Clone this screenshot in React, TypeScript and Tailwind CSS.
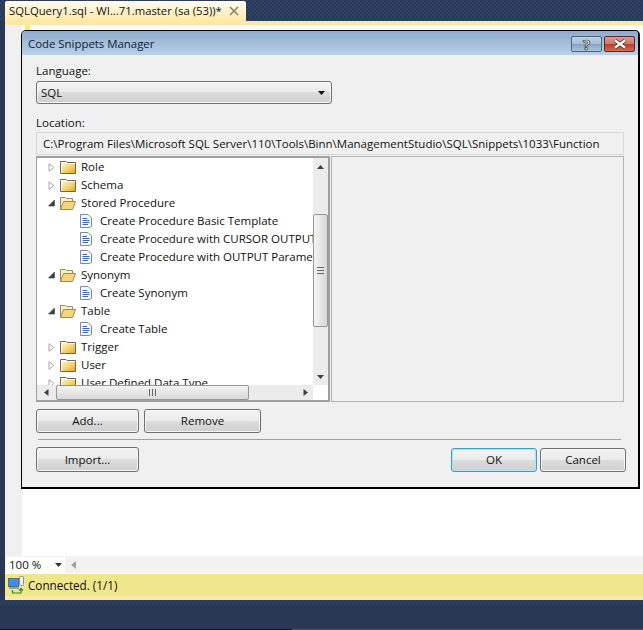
import React from 'react';

const FolderClosed = () => (
  <svg width="16" height="14" viewBox="0 0 16 14" className="shrink-0">
    <defs>
      <linearGradient id="folderBody" x1="0" y1="0" x2="1" y2="1">
        <stop offset="0" stopColor="#fdf3c4" />
        <stop offset="0.55" stopColor="#f6cf68" />
        <stop offset="1" stopColor="#e2a630" />
      </linearGradient>
    </defs>
    <path d="M0.5 2.5V1.5H6L7 2.5H15.5V13.5H0.5Z" fill="#fffbe8" stroke="#6e6650" />
    <rect x="2" y="4" width="13" height="9" fill="url(#folderBody)" />
  </svg>
);

const FolderOpen = () => (
  <svg width="16" height="14" viewBox="0 0 16 14" className="shrink-0">
    <path d="M0.5 13.5V1.5H5.5L6.5 2.5H12.5V5.5" fill="#fbf0c8" stroke="#9a8a5c" />
    <path d="M0.5 13.5L3.5 5.5H15.5L12.5 13.5Z" fill="#f6d57e" stroke="#a08c50" />
  </svg>
);

const DocIcon = () => (
  <svg width="12" height="14" viewBox="0 0 12 14" className="shrink-0">
    <path d="M0.5 0.5H8L11.5 4V12.5L9 13.5H0.5Z" fill="#f7f9fd" stroke="#7a8aa6" />
    <path d="M2.5 4.5H7M2.5 6.5H9.5M2.5 8.5H9.5M2.5 10.5H8" stroke="#3d68b8" />
  </svg>
);

const Expander = ({ open }: { open: boolean }) =>
  open ? (
    <svg width="7" height="8" viewBox="0 0 7 8" className="shrink-0">
      <path d="M6.5 1V7H0.5Z" fill="#404040" stroke="#404040" strokeWidth="0.6" />
    </svg>
  ) : (
    <svg width="7" height="9" viewBox="0 0 7 9" className="shrink-0">
      <path d="M1 0.7L5.8 4.5L1 8.3Z" fill="#fff" stroke="#a6a6a6" />
    </svg>
  );

type Row = { label: string; kind: 'closed' | 'open' | 'doc' };

const rows: Row[] = [
  { label: 'Role', kind: 'closed' },
  { label: 'Schema', kind: 'closed' },
  { label: 'Stored Procedure', kind: 'open' },
  { label: 'Create Procedure Basic Template', kind: 'doc' },
  { label: 'Create Procedure with CURSOR OUTPUT Parameter', kind: 'doc' },
  { label: 'Create Procedure with OUTPUT Parameters', kind: 'doc' },
  { label: 'Synonym', kind: 'open' },
  { label: 'Create Synonym', kind: 'doc' },
  { label: 'Table', kind: 'open' },
  { label: 'Create Table', kind: 'doc' },
  { label: 'Trigger', kind: 'closed' },
  { label: 'User', kind: 'closed' },
  { label: 'User Defined Data Type', kind: 'closed' },
];

const TreeRow = ({ row }: { row: Row }) => {
  if (row.kind === 'doc') {
    return (
      <div className="h-[18px] flex items-center pl-[43px] whitespace-nowrap">
        <DocIcon />
        <span className="ml-[8px]">{row.label}</span>
      </div>
    );
  }
  return (
    <div className="h-[18px] flex items-center pl-[11px] whitespace-nowrap">
      <div className="w-[12px]">
        <Expander open={row.kind === 'open'} />
      </div>
      {row.kind === 'open' ? <FolderOpen /> : <FolderClosed />}
      <span className="ml-[5px]">{row.label}</span>
    </div>
  );
};

const Btn = ({ label, className, primary }: { label: string; className: string; primary?: boolean }) => (
  <button
    className={`${className} rounded-[3px] border text-[11.5px] text-[#111] bg-[linear-gradient(#f3f3f3_0%,#ebebeb_48%,#dddddd_50%,#cfcfcf_100%)] ${
      primary
        ? 'border-[#3c9bc8] shadow-[inset_0_0_0_1px_#a8e4f8]'
        : 'border-[#707070] shadow-[inset_0_0_0_1px_#f8f8f8]'
    }`}
  >
    {label}
  </button>
);

const Arrow = ({ d }: { d: string }) => (
  <svg width="9" height="9" viewBox="0 0 9 9" className="shrink-0">
    <path d={d} fill="#404040" />
  </svg>
);

export default function App() {
  return (
    <div
      className="relative w-[643px] h-[630px] overflow-hidden flex flex-col bg-[#293955] text-[#111] text-[11.5px] leading-4"
      style={{ fontFamily: '"Open Sans", "Noto Sans", sans-serif' }}
    >
      {/* document tab */}
      <div className="h-[21px] pl-[5px] pt-[1px] bg-[repeating-conic-gradient(#2f4264_0_25%,#293955_0_50%)] bg-[length:4px_4px]">
        <div className="w-[241px] h-[20px] pl-[4px] pr-[7px] rounded-t-[2px] bg-[linear-gradient(#fffcf4,#ffe8a6)] flex items-center justify-between text-[11.3px]">
          <span className="whitespace-nowrap">SQLQuery1.sql - WI...71.master (sa (53))*</span>
          <svg width="10" height="10" viewBox="0 0 10 10">
            <path d="M1 1L9 9M9 1L1 9" stroke="#8c8468" strokeWidth="1.6" />
          </svg>
        </div>
      </div>
      <div className="h-[4px] ml-[5px] bg-[#ffe8a6]" />

      {/* editor */}
      <div className="h-[531px] ml-[5px] flex bg-white">
        <div className="w-[17px] bg-[#f0f0f0]" />
        <div className="w-[5px] h-[6px] ml-[3px] bg-[#ffee62]" />
      </div>

      {/* zoom bar */}
      <div className="h-[17px] ml-[5px] flex items-center bg-[#f2f2f2]">
        <div className="w-[59px] h-[16px] ml-[1px] pl-[3px] pr-[3px] bg-white flex items-center justify-between">
          <span>100 %</span>
          <svg width="7" height="4" viewBox="0 0 7 4">
            <path d="M0 0H7L3.5 4Z" fill="#333" />
          </svg>
        </div>
        <svg width="5" height="8" viewBox="0 0 5 8" className="ml-[6px]">
          <path d="M5 0V8L0 4Z" fill="#a0a0a0" />
        </svg>
      </div>

      {/* status bar */}
      <div className="h-[1px] ml-[5px] bg-white" />
      <div className="h-[22px] ml-[5px] pl-[3px] flex items-center bg-[#f0e68c]">
        <svg width="16" height="18" viewBox="0 0 16 18" className="shrink-0">
          <rect x="0.5" y="2.5" width="10" height="8" fill="#3f8fe0" stroke="#566a8a" />
          <rect x="1" y="11" width="10" height="2" fill="#8fa0b8" />
          <rect x="11.5" y="0.5" width="4" height="9" rx="1" fill="#eef2f8" stroke="#7f8ea6" />
          <path d="M4.5 14V17H13V13M11 14.5L13 12.5L15 14.5" fill="none" stroke="#2e8b1e" strokeWidth="1.2" />
        </svg>
        <span className="ml-[4px] text-[11.7px]">Connected. (1/1)</span>
      </div>
      <div className="h-[4px] ml-[5px] bg-[#ffe8a6]" />

      {/* footer */}
      <div className="h-[5px] bg-[repeating-conic-gradient(#2f4264_0_25%,#293955_0_50%)] bg-[length:4px_4px]" />
      <div className="flex-1" />
      <div className="h-[1px] flex">
        <div className="w-[292px] bg-[#0d1420]" />
        <div className="flex-1 bg-[#4a5566]" />
      </div>

      {/* modal dialog */}
      <div className="absolute left-[21px] top-[30px] w-[619px] h-[459px] rounded-t-[5px] border border-black border-b-2 border-r-2 bg-[#f0f0f0] flex flex-col overflow-hidden">
        <div className="h-[24px] shrink-0 pl-[6px] pr-[3px] flex items-center justify-between bg-[linear-gradient(#8fabcc,#b9d1ea)] text-[11.4px]">
          <span className="text-[#10202f] mt-[2px]">Code Snippets Manager</span>
          <div className="flex gap-[2px] mt-[1px]">
            <div className="w-[31px] h-[16px] rounded-[2px] border border-[#4e6279] bg-[linear-gradient(#bdd0e6_0%,#a9c0da_48%,#88a3c2_50%,#a9c3df_100%)] flex items-center justify-center text-[15px] font-bold text-white [-webkit-text-stroke:0.7px_#222]">
              ?
            </div>
            <div className="w-[31px] h-[16px] rounded-[2px] border border-[#5a2a28] bg-[linear-gradient(#dc9a8d_0%,#cf7767_48%,#b63f2b_50%,#cf6a50_100%)] flex items-center justify-center">
              <svg width="16" height="10" viewBox="0 0 16 10">
                <path d="M3 1.5L13 8.5M13 1.5L3 8.5" stroke="#3a2a2a" strokeWidth="3.6" />
                <path d="M3 1.5L13 8.5M13 1.5L3 8.5" stroke="#fff" strokeWidth="2.2" />
              </svg>
            </div>
          </div>
        </div>

        <div className="pl-[14px] pr-[14px] pt-[8px]">
          <div className="h-[16px]">Language:</div>
          <div className="mt-[2px] w-[296px] h-[23px] pl-[4px] pr-[6px] rounded-[3px] border border-[#707070] shadow-[inset_0_0_0_1px_#f8f8f8] bg-[linear-gradient(#f3f3f3_0%,#ebebeb_48%,#dddddd_50%,#cfcfcf_100%)] flex items-center justify-between">
            <span>SQL</span>
            <svg width="7" height="4" viewBox="0 0 7 4">
              <path d="M0 0H7L3.5 4Z" fill="#111" />
            </svg>
          </div>

          <div className="mt-[11px] h-[16px]">Location:</div>
          <div className="mt-[1px] w-[588px] h-[23px] pl-[6px] border border-[#d9d9d9] bg-[#f0f0f0] flex items-center whitespace-nowrap">
            C:\Program Files\Microsoft SQL Server\110\Tools\Binn\ManagementStudio\SQL\Snippets\1033\Function
          </div>

          <div className="mt-[1px] w-[588px] h-[246px] flex gap-[1px]">
            <div className="w-[294px] h-full border border-t-2 border-b-2 border-r-2 border-[#a0a0a0] bg-white flex flex-col">
              <div className="flex h-[227px]">
                <div className="w-[276px] overflow-hidden">
                  {rows.map((row) => (
                    <TreeRow key={row.label} row={row} />
                  ))}
                </div>
                <div className="w-[15px] bg-[#ececec] flex flex-col items-center">
                  <div className="h-[18px] flex items-center">
                    <Arrow d="M4.5 2L8 6H1Z" />
                  </div>
                  <div className="w-[15px] h-[113px] mt-[38px] rounded-[2px] border border-[#979797] bg-[linear-gradient(90deg,#f4f4f4,#d8d8d8)] flex items-center justify-center">
                    <svg width="7" height="7" viewBox="0 0 7 7">
                      <path d="M0 0.5H7M0 3.5H7M0 6.5H7" stroke="#666" />
                    </svg>
                  </div>
                  <div className="flex-1" />
                  <div className="h-[18px] flex items-center">
                    <Arrow d="M1 3H8L4.5 7Z" />
                  </div>
                </div>
              </div>
              <div className="h-[15px] w-[276px] bg-[#ececec] flex items-center">
                <div className="w-[19px] flex justify-center">
                  <Arrow d="M6.5 1V8L2 4.5Z" />
                </div>
                <div className="w-[193px] h-[15px] rounded-[2px] border border-[#979797] bg-[linear-gradient(#f4f4f4,#d8d8d8)] flex items-center justify-center">
                  <svg width="7" height="7" viewBox="0 0 7 7">
                    <path d="M0.5 0V7M3.5 0V7M6.5 0V7" stroke="#666" />
                  </svg>
                </div>
                <div className="flex-1 flex justify-end pr-[3px]">
                  <Arrow d="M2.5 1V8L7 4.5Z" />
                </div>
              </div>
            </div>
            <div className="w-[293px] h-full border border-[#b5b5b5] bg-[#f0f0f0]" />
          </div>

          <div className="mt-[7px] flex gap-[5px]">
            <Btn label="Add..." className="w-[103px] h-[24px]" />
            <Btn label="Remove" className="w-[117px] h-[24px]" />
          </div>

          <div className="mt-[6px] ml-[2px] w-[583px] h-[1px] bg-[#a0a0a0]" />

          <div className="mt-[7px] w-[590px] flex items-center">
            <Btn label="Import..." className="w-[103px] h-[25px]" />
            <div className="flex-1" />
            <Btn label="OK" className="w-[86px] h-[24px]" primary />
            <Btn label="Cancel" className="w-[86px] h-[24px] ml-[3px]" />
          </div>
        </div>
      </div>
    </div>
  );
}
